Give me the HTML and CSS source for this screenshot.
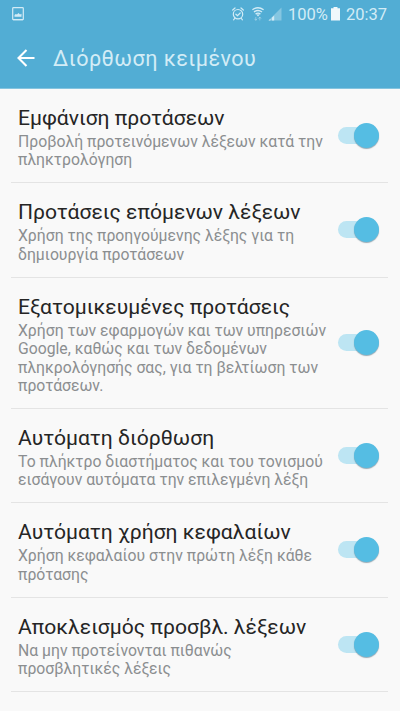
FILE: index.html
```html
<!DOCTYPE html>
<html lang="el">
<head>
<meta charset="utf-8">
<title>Διόρθωση κειμένου</title>
<link rel="stylesheet" href="styles.css">
</head>
<body>
<header class="header">
  <div class="status">
    <svg class="shot" width="12" height="14" viewBox="0 0 12 14"><rect x=".7" y=".7" width="10.6" height="12" rx=".8" fill="none" stroke="currentColor" stroke-width="1.2"/><path d="M2.5 9.7V8l1.3-1.1L5 7.6l1.5-1.5L8 7.5l1.5-.8v3zM1 12h10v1.2H1z" fill="currentColor"/></svg>
    <svg class="alarm" width="12" height="14" viewBox="0 0 12 14"><g fill="none" stroke="currentColor" stroke-width="1.2" stroke-linecap="round"><circle cx="6" cy="7.2" r="4.7"/><path d="M.7 3 3 1M11.3 3 9 1M2.6 11.5l-1 1.3M9.4 11.5l1 1.3M3.9 7.2l1.6 1.5L8.2 6"/></g></svg>
    <svg class="wifi" width="12" height="14" viewBox="0 0 12 14"><g fill="none" stroke="currentColor" stroke-width="1.4"><path d="M.4 2.8Q6-1.2 11.6 2.8M2 5Q6 2 10 5M3.6 7.1Q6 5.2 8.4 7.1"/></g><path d="m4.5 7.8 1.5 1.6 1.5-1.6Q6 6.8 4.5 7.8z" fill="currentColor"/><path d="M3.8 10v3.2M2.5 11.8l1.3 1.6 1.3-1.6M7.8 13.4v-3.2M6.5 11.6 7.8 10l1.3 1.6" fill="none" stroke="currentColor" opacity=".45"/></svg>
    <svg class="signal" width="14" height="14" viewBox="0 0 14 14"><path d="M13.5.5v13H.5z" fill="currentColor" opacity=".4"/><path d="M.5 13.5 2.5 11.7v1.8zM3.8 10.7 6.2 8.5v5H3.8z" fill="currentColor"/></svg>
    <span class="percent">100%</span>
    <svg class="battery" width="9" height="14" viewBox="0 0 9 14"><path d="M2.5 0h4v1.2H9V13.5H0V1.2h2.5z" fill="currentColor"/></svg>
    <span class="clock">20:37</span>
  </div>
  <div class="bar">
    <svg class="back" width="18" height="18" viewBox="0 0 18 18"><path d="M17.5 9H1.5M9.5 1 1.5 9l8 8" fill="none" stroke="currentColor" stroke-width="2.1"/></svg>
    <h1>Διόρθωση κειμένου</h1>
  </div>
</header>
<main>
  <section class="row"><div class="text"><h2>Εμφάνιση προτάσεων</h2><p>Προβολή προτεινόμενων λέξεων κατά την<br>πληκτρολόγηση</p></div><i class="switch"></i></section>
  <section class="row"><div class="text"><h2>Προτάσεις επόμενων λέξεων</h2><p>Χρήση της προηγούμενης λέξης για τη<br>δημιουργία προτάσεων</p></div><i class="switch"></i></section>
  <section class="row"><div class="text"><h2>Εξατομικευμένες προτάσεις</h2><p>Χρήση των εφαρμογών και των υπηρεσιών<br>Google, καθώς και των δεδομένων<br>πληκρολόγησής σας, για τη βελτίωση των<br>προτάσεων.</p></div><i class="switch"></i></section>
  <section class="row"><div class="text"><h2>Αυτόματη διόρθωση</h2><p>Το πλήκτρο διαστήματος και του τονισμού<br>εισάγουν αυτόματα την επιλεγμένη λέξη</p></div><i class="switch"></i></section>
  <section class="row"><div class="text"><h2>Αυτόματη χρήση κεφαλαίων</h2><p>Χρήση κεφαλαίου στην πρώτη λέξη κάθε<br>πρότασης</p></div><i class="switch"></i></section>
  <section class="row"><div class="text"><h2>Αποκλεισμός προσβλ. λέξεων</h2><p>Να μην προτείνονται πιθανώς<br>προσβλητικές λέξεις</p></div><i class="switch"></i></section>
</main>
</body>
</html>
```
FILE: styles.css
```css
* { box-sizing: border-box; }
body { margin: 0; height: 711px; overflow: hidden; background: #f9f9f9; font-family: Roboto, "Noto Sans", sans-serif; }
h1, h2, p { margin: 0; font-weight: 400; white-space: nowrap; }
svg { display: block; flex: none; }
.header { height: 88.7px; background: #52add4; border-bottom: 1px solid #85c4df; color: #d3ecf6; }
.status { height: 28px; display: flex; align-items: center; padding: 0 13px 0 12px; font-size: 16.5px; line-height: 28px; }
.status span { padding-top: 1px; }
.alarm { margin-left: auto; }
.wifi { margin-left: 8px; }
.signal { margin-left: 4px; }
.percent { margin-left: 6px; width: 40px; }
.battery { margin-left: 3px; color: #f0f8fb; }
.clock { margin-left: 6px; width: 41px; }
.bar { height: 60px; display: flex; align-items: center; padding-left: 17px; }
.back { color: #fff; }
h1 { margin-left: 18px; font-size: 21.6px; line-height: 30px; letter-spacing: .45px; padding-top: 2px; }
main { padding: 0 12px 0 11px; }
.row { display: flex; align-items: center; justify-content: space-between; padding: 14.3px 8px 12.3px 7px; border-bottom: 1px solid #e4e4e4; }
.text { width: 310px; }
h2 { font-size: 21.1px; line-height: 30px; color: #252525; }
p { font-size: 15.75px; line-height: 18.4px; color: #8b8e90; }
.switch { flex: none; width: 42px; height: 26px; margin-top: -2px; display: flex; align-items: center; }
.switch::before { content: ""; width: 34px; height: 17px; border-radius: 9px; background: #bde5f3; }
.switch::after { content: ""; flex: none; width: 25px; height: 25px; margin-left: -17.6px; border-radius: 50%; background: #55bde3; box-shadow: 0 1px 1px #55778899; }
```
